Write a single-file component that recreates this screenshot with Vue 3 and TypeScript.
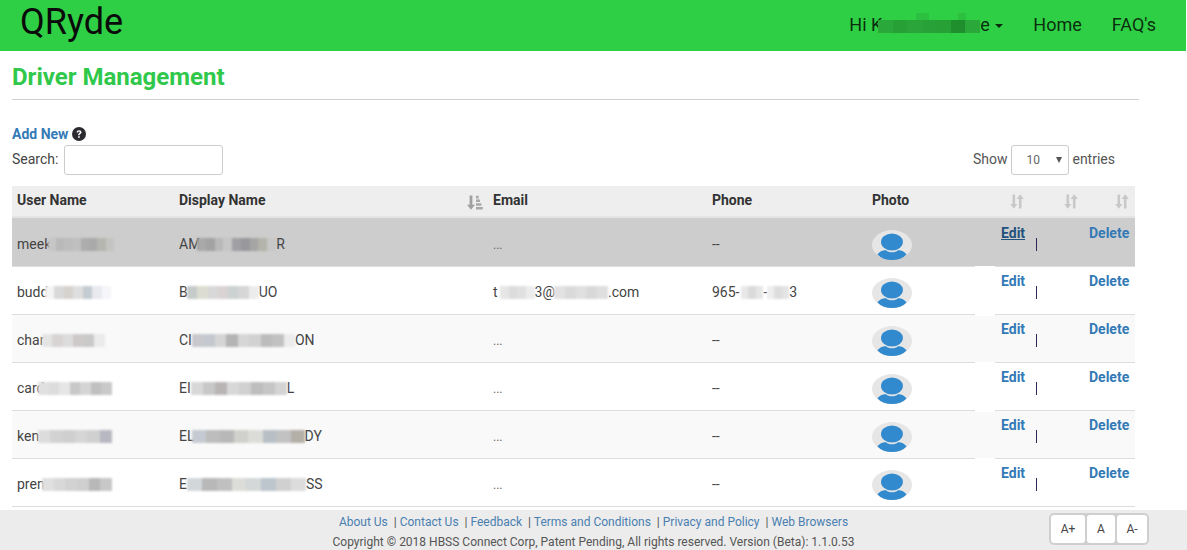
<script setup lang="ts">
interface Blur { pre: string; w: number; ml?: number; colors: string[]; post?: string }
interface Row { user: Blur; display: Blur; email: Blur[] | null; phone: Blur[] | null; hover?: boolean; striped?: boolean }

const grad = (c: string[]) => {
  const n = c.length
  const stops = c.map((col, i) => `${col} ${(i / n) * 100}%, ${col} ${((i + 1) / n) * 100}%`).join(', ')
  return { background: `linear-gradient(90deg, ${stops})` }
}

const rows: Row[] = [
  {
    hover: true,
    user: { pre: 'meek', w: 66, ml: -3, colors: ['#c6c6c6', '#b9b9b9', '#bdbdbd', '#c0c0c0', '#adadad', '#a9a9a9', '#b6b6b0', '#c4c4c2'] },
    display: { pre: 'AM', w: 79, ml: -3, colors: ['#a9a9a9', '#a3a3a3', '#b9b9b9', '#c6c6c6', '#a0a0a4', '#98989c', '#a5a5a5', '#b4b4ac', '#c8c8c8'], post: 'R' },
    email: null,
    phone: null
  },
  {
    user: { pre: 'budd', w: 66, ml: -3, colors: ['#f4f4f4', '#d9d9d9', '#d6d2ce', '#dedede', '#c3ccd2', '#e8eaef', '#f6f6fa'] },
    display: { pre: 'B', w: 72, ml: -1, colors: ['#c5cbc9', '#dcdcd2', '#d8d8d8', '#d9d3d3', '#ccd1d2', '#d6d6d6', '#ececec'], post: 'UO' },
    email: [
      { pre: 't', w: 35, ml: 2, colors: ['#e6e6e6', '#dcdcdc', '#e0e0e0', '#ececec'] },
      { pre: '3@', w: 54, ml: -1, colors: ['#e2e2e2', '#dadada', '#e0e0e0', '#d8d8d8', '#dfdfdf'], post: '.com' }
    ],
    phone: [
      { pre: '965-', w: 22, ml: 2, colors: ['#e8e8e8', '#dadada', '#e6e6e6'] },
      { pre: '-', w: 22, colors: ['#eeeeee', '#dddddd', '#e4e4e4'], post: '3' }
    ]
  },
  {
    striped: true,
    user: { pre: 'char', w: 63, ml: -2, colors: ['#e4e4e4', '#d8d4d4', '#dcdcdc', '#cfcaca', '#c9c9c9', '#ebebeb'] },
    display: { pre: 'CI', w: 103, colors: ['#c9c9cd', '#c5c9cf', '#d5d5d5', '#b4b4b4', '#d6d6d6', '#d2d2d2', '#bcbcbc', '#c2c2c2', '#ececec'], post: 'ON' },
    email: null,
    phone: null
  },
  {
    user: { pre: 'card', w: 74, ml: -6, colors: ['#e0e0e0', '#dcdcdc', '#e6e6e6', '#c8c8c8', '#d5d5d5', '#c0c0c0', '#c9c9c9'] },
    display: { pre: 'EI', w: 96, colors: ['#d8d8d8', '#c8c8c8', '#b9b5b5', '#d8d8d8', '#d0d0d0', '#bebebe', '#c6c6c6', '#d4d4d4'], post: 'L' },
    email: null,
    phone: null
  },
  {
    striped: true,
    user: { pre: 'ken', w: 74, ml: -1, colors: ['#dcdcdc', '#d2d2d2', '#cfcfcf', '#d6d6d6', '#d0d0d0', '#b8b8c2'] },
    display: { pre: 'EL', w: 113, ml: -3, colors: ['#c5cad2', '#bdbdbd', '#b8b8b8', '#d0d0cc', '#dcdcd8', '#b8c0c6', '#c2c2c2', '#b4b0a8'], post: 'DY' },
    email: null,
    phone: null
  },
  {
    user: { pre: 'pren', w: 70, ml: -3, colors: ['#e0e0e0', '#d8d8d8', '#d2d2d2', '#cfcfcf', '#b8b8b8', '#c8c8c8'] },
    display: { pre: 'E', w: 119, ml: 0, colors: ['#d2d8da', '#b8b8b8', '#c0c0c0', '#dcdcd8', '#d4d8d8', '#bcc6cc', '#d0d0d0', '#dcdcdc'], post: 'SS' },
    email: null,
    phone: null
  }
]

const footerLinks = ['About Us', 'Contact Us', 'Feedback', 'Terms and Conditions', 'Privacy and Policy', 'Web Browsers']
const sizes = [
  { label: 'A+', cls: 'sz-l' },
  { label: 'A', cls: 'sz-m' },
  { label: 'A-', cls: 'sz-s' }
]
const navPatch = ['#2aa83a', '#27a036', '#2aa53a', '#28a238', '#27a036', '#1f8f2e', '#2aa83a']
</script>

<template>
  <div class="page">
    <header class="nav">
      <span class="brand">QRyde</span>
      <nav class="menu">
        <span class="hi">Hi K<span class="nav-blur" :style="grad(navPatch)"></span>e <i class="caret"></i></span>
        <span class="item">Home</span>
        <span class="item">FAQ's</span>
      </nav>
    </header>

    <main class="main">
      <h1 class="title">Driver Management</h1>
      <div class="add">
        <a class="link strong">Add New</a>
        <svg class="help" viewBox="0 0 14 14" width="14" height="14">
          <circle cx="7" cy="7" r="7" fill="#2b2b2f" />
          <path d="M4.600 5.400C4.700 3.900 5.700 3.200 7.100 3.200c1.400 0 2.400.8 2.400 2 0 1-.6 1.400-1.200 1.800-.5.3-.6.5-.6 1v.3H6.100v-.5c0-.8.3-1.200.9-1.600.5-.3.8-.5.8-.9 0-.4-.3-.7-.8-.7-.6 0-.8.3-.9.8zM6.100 9.200h1.700v1.600H6.100z" fill="#fff" />
        </svg>
      </div>
      <div class="controls">
        <label class="search"><span class="lbl">Search:</span> <input class="input" type="text" /></label>
        <div class="show">
          <span class="lbl">Show</span>
          <span class="select">10<i class="tri"></i></span>
          <span class="lbl">entries</span>
        </div>
      </div>

      <table class="table">
        <colgroup>
          <col class="c1" /><col class="c2" /><col class="c3" /><col class="c4" /><col class="c5" /><col class="c6" /><col class="c7" />
        </colgroup>
        <thead>
          <tr>
            <th>User Name</th>
            <th class="th-sorted">
              Display Name
              <svg class="sort-active" viewBox="0 0 16 15" width="16" height="15">
                <path d="M2.600 0.500h2.800v9.300H8L4 14.800 0 9.800h2.600z" fill="#a0a0a0" />
                <path d="M9 .8h2.600v2.600H9zM9 4.500h4v2.600H9zM9 8.200h5.400v2.600H9zM9 11.900h6.800v2.600H9z" fill="#a8a8a8" />
              </svg>
            </th>
            <th>Email</th>
            <th>Phone</th>
            <th>Photo</th>
            <th colspan="2">
              <div class="sorts">
                <svg v-for="n in 3" :key="n" class="sort" :class="'sort' + n" viewBox="0 0 14 15" width="14" height="15">
                  <path d="M2.500 .5h2.600v9.500h2.300L3.800 14.800 .2 10h2.300zM8.900 14.500h2.600V5h2.300L10.200 .2 6.600 5h2.300z" fill="#c8c8c8" />
                </svg>
              </div>
            </th>
          </tr>
        </thead>
        <tbody>
          <tr v-for="(r, i) in rows" :key="i" :class="{ hover: r.hover, striped: r.striped }">
            <td>
              {{ r.user.pre }}<span class="blur" :style="[grad(r.user.colors), { width: r.user.w + 'px', marginLeft: (r.user.ml || 0) + 'px' }]"></span>
            </td>
            <td>
              {{ r.display.pre }}<span class="blur" :style="[grad(r.display.colors), { width: r.display.w + 'px', marginLeft: (r.display.ml || 0) + 'px' }]"></span>{{ r.display.post }}
            </td>
            <td>
              <template v-if="r.email">
                <template v-for="(p, k) in r.email" :key="k">{{ p.pre }}<span class="blur" :style="[grad(p.colors), { width: p.w + 'px', marginLeft: (p.ml || 0) + 'px' }]"></span>{{ p.post }}</template>
              </template>
              <span v-else class="dots">...</span>
            </td>
            <td>
              <template v-if="r.phone">
                <template v-for="(p, k) in r.phone" :key="k">{{ p.pre }}<span class="blur" :style="[grad(p.colors), { width: p.w + 'px', marginLeft: (p.ml || 0) + 'px' }]"></span>{{ p.post }}</template>
              </template>
              <template v-else>--</template>
            </td>
            <td class="photo">
              <svg viewBox="0 0 40 30" width="40" height="30">
                <ellipse cx="20" cy="15" rx="20" ry="15" fill="#e6e6e6" />
                <ellipse cx="20" cy="12" rx="11" ry="8.600" fill="#3189ce" />
                <path d="M5.500 24.400C8 20.600 12 20 14 20.200c1.600 1.400 3.600 2 6 2s4.400-.6 6-2c2-.2 6 .4 8.500 4.200C31 28 26 30 20 30S9 28 5.500 24.400z" fill="#3189ce" />
              </svg>
            </td>
            <td class="act act-edit">
              <a class="link strong" :class="{ under: r.hover }">Edit</a><span class="sep"></span>
            </td>
            <td class="act act-del"><a class="link strong">Delete</a></td>
          </tr>
        </tbody>
      </table>
    </main>

    <footer class="footer">
      <div class="links">
        <template v-for="(l, i) in footerLinks" :key="l">
          <span v-if="i" class="bar"> | </span><a class="flink">{{ l }}</a>
        </template>
      </div>
      <div class="copy">Copyright © 2018 HBSS Connect Corp, Patent Pending, All rights reserved. Version (Beta): 1.1.0.53</div>
      <div class="sizes">
        <button v-for="s in sizes" :key="s.label" class="size" :class="s.cls" type="button">{{ s.label }}</button>
      </div>
    </footer>
  </div>
</template>

<style>
html, body { margin: 0; background: #fff; overflow: hidden; }
</style>

<style scoped>
.page {
  font-family: Roboto, "Liberation Sans", sans-serif;
  font-size: 14px;
  line-height: 20px;
  color: #333;
  height: 550px;
  overflow: hidden;
  position: relative;
}
.nav {
  height: 51px;
  margin-right: 1px;
  background: #2ecf44;
  display: flex;
  align-items: center;
  justify-content: space-between;
  padding: 0 30px 0 20px;
}
.brand {
  font-size: 36px;
  line-height: 44px;
  color: #0a0a0a;
  margin-top: -7px;
}
.menu {
  display: flex;
  gap: 30px;
  font-size: 18px;
  color: rgba(0, 0, 0, 0.8);
  margin-top: -1px;
}
.hi { display: flex; align-items: center; white-space: pre; }
.nav-blur {
  position: relative;
  display: inline-block;
  width: 102px;
  height: 13px;
  margin: 3px 0 0 -4px;
  filter: blur(0.6px);
}
.nav-blur::before,
.nav-blur::after {
  content: "";
  position: absolute;
  bottom: 100%;
  height: 7px;
  background: #2bc040;
}
.nav-blur::before { left: 38px; width: 13px; }
.nav-blur::after { left: 80px; width: 8px; }
.caret {
  display: inline-block;
  margin-left: 1px;
  margin-top: 2px;
  border-top: 4px solid rgba(0, 0, 0, 0.8);
  border-left: 4px solid transparent;
  border-right: 4px solid transparent;
}
.main { padding: 0 12px; }
.title {
  margin: 0 36px 0 0;
  height: 48px;
  font-size: 24px;
  line-height: 52px;
  font-weight: 700;
  color: #30c84b;
  border-bottom: 1px solid #cfcfcf;
}
.add {
  display: flex;
  align-items: center;
  gap: 4px;
  margin-top: 24px;
  height: 20px;
}
.link { color: #337ab7; }
.strong { font-weight: 700; }
.under { text-decoration: underline; color: #23527c; }
.help { display: block; margin-top: -1px; }
.controls {
  display: flex;
  justify-content: space-between;
  align-items: center;
  margin-top: 1px;
  height: 30px;
  padding-right: 60px;
}
.lbl { margin-bottom: 2px; }
.search { display: flex; align-items: center; gap: 6px; color: #444; }
.input {
  width: 159px;
  height: 30px;
  box-sizing: border-box;
  border: 1px solid #ccc;
  border-radius: 3px;
  background: #fff;
  padding: 0 6px;
  outline: none;
}
.show { display: flex; align-items: center; gap: 3px; color: #555; }
.select {
  position: relative;
  width: 58px;
  height: 30px;
  box-sizing: border-box;
  border: 1px solid #ccc;
  border-radius: 3px;
  font-size: 12px;
  line-height: 28px;
  color: #666;
  padding-left: 14px;
  margin-left: 1px;
}
.tri {
  position: absolute;
  right: 6px;
  top: 11px;
  border-top: 6px solid #555;
  border-left: 3px solid transparent;
  border-right: 3px solid transparent;
}
.table {
  width: 1123px;
  margin-top: 11px;
  border-collapse: separate;
  border-spacing: 0;
  table-layout: fixed;
}
.c1 { width: 162px; }
.c2 { width: 314px; }
.c3 { width: 219px; }
.c4 { width: 160px; }
.c5 { width: 129px; }
.c6 { width: 83px; }
.c7 { width: 56px; }
th {
  height: 32px;
  box-sizing: border-box;
  background: #eee;
  text-align: left;
  vertical-align: top;
  padding: 4px 5px 0;
  font-weight: 700;
  color: #333;
  border-bottom: 2px solid #e4e4e4;
  position: relative;
}
.th-sorted { padding-right: 0; }
.sort-active { position: absolute; right: 5px; top: 9px; }
.sorts { display: flex; padding-left: 9px; margin-top: 4px; }
.sort { flex: none; }
.sort2 { margin-left: 40px; }
.sort3 { margin-left: 37px; }
td {
  height: 48px;
  box-sizing: border-box;
  vertical-align: top;
  padding: 15px 5px 0;
  border-top: 1px solid #ddd;
  color: #444;
  white-space: nowrap;
  background: #fff;
}
tr:last-child td { height: 49px; border-bottom: 1px solid #ddd; }
tr.striped td { background: #f9f9f9; }
tr.hover td { background: #cdcdcd; border-top-color: #cdcdcd; }
.blur {
  display: inline-block;
  height: 13px;
  vertical-align: -2px;
  filter: blur(0.8px);
}
.dots { font-size: 12px; color: #666; }
.photo { padding-top: 11px; }
.photo svg { display: block; }
.act { padding-top: 4px; }
.act-edit { padding-left: 5px; position: relative; }
.act-edit::before {
  content: "";
  position: absolute;
  left: -21px;
  top: -1px;
  width: 20px;
  height: 2px;
  background: #fff;
}
tr.hover .act-edit::before { display: none; }
.sep {
  position: absolute;
  left: 40px;
  top: 19px;
  width: 1px;
  height: 13px;
  background: #2a2a55;
}
.act-del { padding-left: 10px; padding-right: 0; }
.footer {
  position: absolute;
  left: 0;
  right: 0;
  bottom: 0;
  height: 40px;
  box-sizing: border-box;
  padding-top: 2px;
  background: #ececec;
  text-align: center;
  font-size: 12px;
  line-height: 20px;
}
.links { color: #555; }
.flink { color: #4a7fb0; }
.bar { white-space: pre; margin-left: 3px; }
.copy { color: #555; }
.sizes {
  position: absolute;
  left: 1049px;
  top: 3px;
  display: flex;
  padding: 2px;
  background: #cfcfcf;
  border-radius: 5px;
  gap: 2px;
}
.size {
  height: 28px;
  border: 0;
  border-radius: 3px;
  background: #fff;
  font: 12px/28px Roboto, sans-serif;
  color: #444;
  padding: 0;
}
.sz-l { width: 34px; }
.sz-m { width: 28px; }
.sz-s { width: 30px; }
</style>
